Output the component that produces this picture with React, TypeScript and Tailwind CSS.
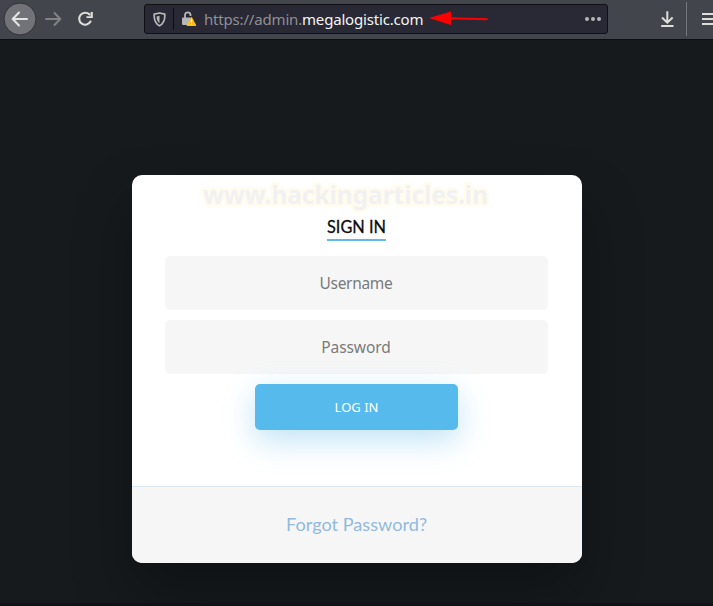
import React from "react";

function Toolbar() {
  return (
    <header className="flex h-10 shrink-0 items-start border-b border-[#0d0e10] bg-[#42454c] font-['Noto_Sans',sans-serif]">
      <div className="mt-0.5 ml-0.5 flex h-[34px] w-[35px] items-center justify-center">
        <svg width="35" height="34" viewBox="0 0 35 34" fill="none">
          <circle cx="18" cy="17" r="16" fill="#717379" stroke="#303238" />
          <path d="M25 17H11M17 10.5L10.7 17L17 23.5" stroke="#e4e4e2" strokeWidth="2" strokeLinecap="round" strokeLinejoin="round" />
        </svg>
      </div>
      <svg className="mt-[11px] ml-2" width="17" height="16" viewBox="0 0 17 16" fill="none">
        <path d="M1 8H15M9.5 2L15.3 8L9.5 14" stroke="#808286" strokeWidth="2" strokeLinecap="round" strokeLinejoin="round" />
      </svg>
      <svg className="mt-[11px] ml-[15px]" width="17" height="16" viewBox="0 0 17 16" fill="none">
        <path d="M12.5 3.5A6 6 0 1 0 13.5 10.5" stroke="#deded9" strokeWidth="2.1" strokeLinecap="round" />
        <path d="M15.8 1V7H9.5V5.2H13.6V1Z" fill="#deded9" />
      </svg>
      <div className="mt-1 ml-[50px] flex h-[30px] w-[464px] items-center rounded-[3px] border border-[#0f1014] bg-[#282934]">
        <svg className="ml-2" width="13" height="15" viewBox="0 0 13 15" fill="none">
          <path d="M6.5 1L11.8 2.2C12.1 7.7 10.5 11.8 6.5 13.8C2.5 11.8 .9 7.7 1.2 2.2Z" stroke="#b7b7b9" strokeWidth="1.7" strokeLinejoin="round" />
          <path d="M6.5 3.8V11.2C4.3 9.6 3.5 7.3 3.6 4.5Z" fill="#b7b7b9" />
        </svg>
        <span className="ml-[7px] h-[22px] w-px bg-[#0c0d11]" />
        <svg className="ml-[7px]" width="16" height="16" viewBox="0 0 16 16">
          <path d="M4 7.5V4C4 .4 9.5 .4 9.5 4V5" fill="none" stroke="#b7b7b9" strokeWidth="1.8" />
          <rect x="1" y="6.5" width="9" height="7.5" rx="1" fill="#b7b7b9" />
          <path d="M10.5 6.7L14.5 14.4H6.5Z" fill="#ffbd18" stroke="#ffbd18" strokeWidth="1.4" strokeLinejoin="round" />
          <path d="M10.5 8.2V11.4M10.5 12.4V13.6" stroke="#fff" strokeWidth="1.2" />
        </svg>
        <span className="ml-[7px] w-[219px] text-[15px] leading-5 tracking-[-0.18px] whitespace-nowrap text-[#8f9097]">
          https://admin.<span className="text-[#f5f5f5]">megalogistic.com</span>
        </span>
        <svg className="ml-[6px]" width="59" height="16" viewBox="0 0 59 16">
          <path d="M0 7L22 0.5V14Z" fill="#ff0000" />
          <path d="M20 7.3L58.5 8.2" stroke="#ff0000" strokeWidth="2" />
        </svg>
        <svg className="ml-[96px]" width="18" height="6" viewBox="0 0 18 6" fill="#b5b5b8">
          <circle cx="3" cy="3" r="2" />
          <circle cx="9" cy="3" r="2" />
          <circle cx="15" cy="3" r="2" />
        </svg>
      </div>
      <svg className="mt-[11px] ml-[53px]" width="13" height="17" viewBox="0 0 13 17" fill="none" stroke="#deded9" strokeWidth="2">
        <path d="M6.3 .3V11.5M1 6.5L6.3 11.7L11.6 6.5M.2 15H12.5" />
      </svg>
      <span className="mt-0.5 ml-3 h-[34px] w-px bg-[#74777c]" />
      <svg className="mt-3 ml-[15px]" width="11" height="14" viewBox="0 0 11 14" stroke="#deded9" strokeWidth="2">
        <path d="M0 2H11M0 7H11M0 12H11" />
      </svg>
    </header>
  );
}

export default function App() {
  return (
    <div className="flex h-[606px] w-[713px] flex-col overflow-hidden bg-[#161a1d]">
      <Toolbar />
      <main className="flex-1 overflow-hidden border-b-3 border-[#121117] pt-[135px]">
        <section className="relative ml-[132px] flex h-[388px] w-[450px] flex-col rounded-[10px] bg-white shadow-[0_30px_60px_0_rgba(0,0,0,0.3)]">
          <svg className="absolute top-0 left-[60px] overflow-visible" width="310" height="44">
            <text x="11" y="28.5" textLength="285" lengthAdjust="spacingAndGlyphs" fontFamily="Noto Sans" fontWeight="bold" fontSize="25.5" fill="#f1f1f3" stroke="#fffced" strokeWidth="5" strokeLinejoin="round" paintOrder="stroke">www.hackingarticles.in</text>
          </svg>
          <div className="flex justify-center pt-10 pr-0.5">
            <h1 className="h-[26px] w-[59px] border-b-2 border-[#5fbae9]">
              <svg width="59" height="24" className="block">
                <text x="0" y="18" textLength="59" lengthAdjust="spacingAndGlyphs" fontFamily="Lato" fontSize="16.5" fill="#0d0d0d" stroke="#0d0d0d" strokeWidth=".3">SIGN IN</text>
              </svg>
            </h1>
          </div>
          <form className="mt-[15px] flex flex-col items-center gap-2.5 pr-0.5 font-['Noto_Sans',sans-serif]">
            <input placeholder="Username" className="h-[54px] w-[383px] rounded-[5px] bg-[#f6f6f6] pb-px text-center text-[15.5px] tracking-[-0.3px] placeholder:text-[#7a7a7a]" />
            <input placeholder="Password" className="h-[54px] w-[383px] rounded-[5px] bg-[#f6f6f6] pb-px text-center text-[15.5px] tracking-[-0.1px] placeholder:text-[#7a7a7a]" />
            <button type="button" className="h-[46px] w-[203px] rounded-[5px] bg-[#56baed] pt-0.5 pl-px text-[13px] text-white shadow-[0_10px_30px_0_rgba(95,186,233,0.4)]">
              LOG IN
            </button>
          </form>
          <footer className="mt-auto flex h-[77px] items-center justify-center rounded-b-[10px] border-t border-[#dce8f1] bg-[#f6f6f6] pr-0.5">
            <a>
              <svg width="141" height="24" className="block">
                <text x="0" y="18" textLength="141" lengthAdjust="spacingAndGlyphs" fontFamily="Lato" fontSize="17" fill="#92badd">Forgot Password?</text>
              </svg>
            </a>
          </footer>
        </section>
      </main>
    </div>
  );
}
